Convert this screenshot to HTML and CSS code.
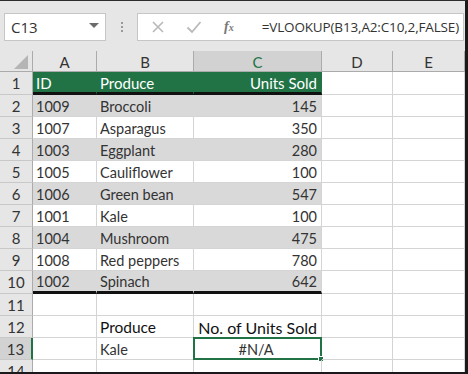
FILE: index.html
```html
<!DOCTYPE html>
<html>
<head>
<meta charset="utf-8">
<link rel="stylesheet" href="styles.css">
</head>
<body>
<div class="app">
  <div class="toolbar">
    <div class="namebox">
      <span class="name">C13</span>
      <svg class="dd" width="10" height="6" viewBox="0 0 10 6"><path d="M0 0H10L5 5Z" fill="#6b6b6b"/></svg>
    </div>
    <div class="grip"><i></i><i></i><i></i></div>
    <div class="fbar">
      <svg class="ic" width="14" height="14" viewBox="0 0 14 14"><path d="M2 2L12 12M12 2L2 12" stroke="#b9b9b9" stroke-width="1.6"/></svg>
      <svg class="ic ck" width="16" height="14" viewBox="0 0 16 14"><path d="M1.5 7.5L6 12L14.5 2" stroke="#b9b9b9" stroke-width="1.8" fill="none"/></svg>
      <span class="fx">f<sub>x</sub></span>
      <span class="formula">=VLOOKUP(B13,A2:C10,2,FALSE)</span>
    </div>
  </div>
  <div class="sheet">
    <div class="row head">
      <div class="rh corner"><svg width="14" height="14" viewBox="0 0 14 14"><path d="M14 0V14H0Z" fill="#b5b5b5"/></svg></div>
      <div class="ch ca">A</div><div class="ch cb">B</div><div class="ch cc sel">C</div><div class="ch cd">D</div><div class="ch ce">E</div>
    </div>
    <div class="row r1 thick">
      <div class="rh">1</div><div class="c ca g">ID</div><div class="c cb g">Produce</div><div class="c cc g num">Units Sold</div><div class="c cd"></div><div class="c ce"></div>
    </div>
    <div class="row">
      <div class="rh">2</div><div class="c ca s">1009</div><div class="c cb s">Broccoli</div><div class="c cc s num">145</div><div class="c cd"></div><div class="c ce"></div>
    </div>
    <div class="row">
      <div class="rh">3</div><div class="c ca">1007</div><div class="c cb">Asparagus</div><div class="c cc num">350</div><div class="c cd"></div><div class="c ce"></div>
    </div>
    <div class="row">
      <div class="rh">4</div><div class="c ca s">1003</div><div class="c cb s">Eggplant</div><div class="c cc s num">280</div><div class="c cd"></div><div class="c ce"></div>
    </div>
    <div class="row">
      <div class="rh">5</div><div class="c ca">1005</div><div class="c cb">Cauliflower</div><div class="c cc num">100</div><div class="c cd"></div><div class="c ce"></div>
    </div>
    <div class="row">
      <div class="rh">6</div><div class="c ca s">1006</div><div class="c cb s">Green bean</div><div class="c cc s num">547</div><div class="c cd"></div><div class="c ce"></div>
    </div>
    <div class="row">
      <div class="rh">7</div><div class="c ca">1001</div><div class="c cb">Kale</div><div class="c cc num">100</div><div class="c cd"></div><div class="c ce"></div>
    </div>
    <div class="row">
      <div class="rh">8</div><div class="c ca s">1004</div><div class="c cb s">Mushroom</div><div class="c cc s num">475</div><div class="c cd"></div><div class="c ce"></div>
    </div>
    <div class="row">
      <div class="rh">9</div><div class="c ca">1008</div><div class="c cb">Red peppers</div><div class="c cc num">780</div><div class="c cd"></div><div class="c ce"></div>
    </div>
    <div class="row thick">
      <div class="rh">10</div><div class="c ca s">1002</div><div class="c cb s">Spinach</div><div class="c cc s num">642</div><div class="c cd"></div><div class="c ce"></div>
    </div>
    <div class="row">
      <div class="rh">11</div><div class="c ca"></div><div class="c cb"></div><div class="c cc"></div><div class="c cd"></div><div class="c ce"></div>
    </div>
    <div class="row">
      <div class="rh">12</div><div class="c ca"></div><div class="c cb lbl">Produce</div><div class="c cc num lbl">No. of Units Sold</div><div class="c cd"></div><div class="c ce"></div>
    </div>
    <div class="row">
      <div class="rh selrow">13</div><div class="c ca"></div><div class="c cb">Kale</div><div class="c cc active">#N/A<span class="handle"></span></div><div class="c cd"></div><div class="c ce"></div>
    </div>
    <div class="row last">
      <div class="rh">14</div><div class="c ca"></div><div class="c cb"></div><div class="c cc"></div><div class="c cd"></div><div class="c ce"></div>
    </div>
  </div>
</div>
</body>
</html>
```
FILE: styles.css
```css
* { box-sizing: border-box; }
html, body { margin: 0; padding: 0; background: #fff; }
.app {
  width: 468px;
  height: 374px;
  overflow: hidden;
  border-top: 1px solid #2b2b2b;
  border-right: 3px solid #1a1a1a;
  border-bottom: 2px solid #1a1a1a;
  font-family: Lato, "Open Sans", sans-serif;
  color: #333;
  display: flex;
  flex-direction: column;
}
.toolbar {
  height: 50px;
  flex: none;
  background: #e6e6e6;
  display: flex;
  align-items: flex-start;
  padding: 12px 0 0 4px;
}
.namebox {
  width: 102px;
  height: 28px;
  background: #fff;
  border: 1px solid #c6c6c6;
  display: flex;
  align-items: center;
  justify-content: space-between;
  padding: 0 6px 0 6px;
}
.name { font-family: "Open Sans", sans-serif; font-size: 15px; color: #333; }
.dd { margin-top: -2px; }
.grip {
  width: 31px;
  height: 28px;
  display: flex;
  flex-direction: column;
  align-items: center;
  justify-content: center;
  gap: 2px;
}
.grip i { display: block; width: 2px; height: 2px; background: #999; }
.fbar {
  width: 327px;
  height: 28px;
  background: #fff;
  border: 1px solid #c6c6c6;
  display: flex;
  align-items: center;
  padding-left: 13px;
}
.ic { flex: none; }
.ck { margin-left: 21px; }
.fx {
  margin-left: 22px;
  font-family: "Liberation Serif", serif;
  font-style: italic;
  font-size: 14px;
  color: #777;
  font-weight: bold;
}
.fx sub { font-size: 10px; vertical-align: 0; }
.formula {
  margin-left: 28px;
  font-family: "Open Sans", sans-serif;
  font-size: 13.5px;
  color: #333;
  letter-spacing: -0.15px;
  white-space: nowrap;
}
.sheet { display: flex; flex-direction: column; }
.row { display: flex; height: 22px; flex: none; }
.row.head { height: 21px; }
.row.thick { height: 23px; }
.row.last .rh { align-items: flex-start; padding-top: 2px; }
.rh {
  width: 33px;
  flex: none;
  background: #e6e6e6;
  border-right: 1px solid #ababab;
  border-bottom: 1px solid #c8c8c8;
  display: flex;
  align-items: center;
  justify-content: center;
  font-size: 15px;
  color: #333;
}
.rh.corner {
  justify-content: flex-end;
  align-items: flex-end;
  padding: 0 4px 2px 0;
  border-bottom: 1px solid #ababab;
}
.rh.selrow { background: #d2d2d2; border-right: 2px solid #217346; }
.ch {
  flex: none;
  background: #e6e6e6;
  border-right: 1px solid #ababab;
  border-bottom: 1px solid #ababab;
  display: flex;
  align-items: center;
  justify-content: center;
  font-size: 15px;
  color: #333;
  padding-top: 1px;
}
.ch.sel { background: #d2d2d2; color: #217346; }
.ca { width: 64px; }
.cb { width: 97px; }
.cc { width: 128px; }
.cd { width: 71px; }
.ce { width: 72px; }
.c {
  flex: none;
  border-right: 1px solid #d4d4d4;
  border-bottom: 1px solid #d4d4d4;
  display: flex;
  align-items: center;
  font-size: 14.5px;
  color: #333;
  padding: 1px 3px 0 3px;
  white-space: nowrap;
  position: relative;
}
.c.num { justify-content: flex-end; padding-right: 4px; }
.c.g { background: #217346; color: #fff; border-color: #217346; font-size: 15px; }
.c.s { background: #d9d9d9; border-right-color: #d9d9d9; }
.c.s.cc { border-right-color: #d4d4d4; }
.thick .ca, .thick .cb, .thick .cc { border-bottom: 3px solid #111; }
.c.lbl { color: #111; font-size: 15.5px; }
.c.cc.lbl { font-size: 16px; }
.c.active {
  justify-content: center;
  border: 2px solid #217346;
  margin: -1px 0 0 -1px;
  width: 129px;
  height: 23px;
  padding-right: 6px;
}
.handle {
  position: absolute;
  right: -4px;
  bottom: -4px;
  width: 6px;
  height: 6px;
  background: #217346;
  border: 1px solid #fff;
}
```
